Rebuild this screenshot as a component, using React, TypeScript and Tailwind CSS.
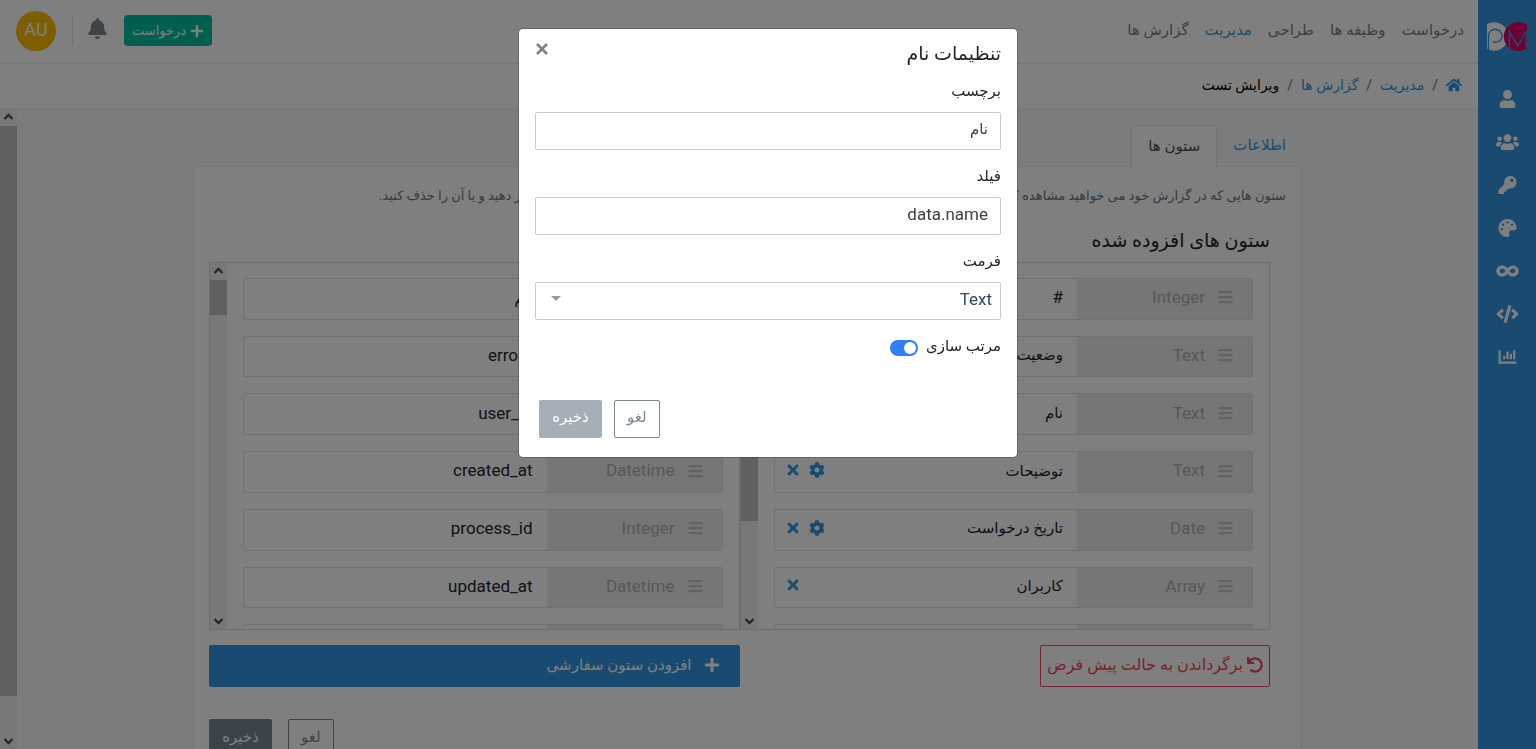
import type { ReactNode } from 'react'
import {
  FaBars,
  FaBell,
  FaChartBar,
  FaCode,
  FaCog,
  FaHome,
  FaInfinity,
  FaKey,
  FaPalette,
  FaPlus,
  FaTimes,
  FaUndo,
  FaUser,
  FaUsers,
} from 'react-icons/fa'

type Column = {
  label: string
  type: string
  config?: boolean
  remove?: boolean
}

const sideLinks = [
  { label: 'کاربران', icon: FaUser },
  { label: 'گروه ها', icon: FaUsers },
  { label: 'احراز هویت', icon: FaKey },
  { label: 'ظاهر', icon: FaPalette },
  { label: 'صف ها', icon: FaInfinity },
  { label: 'اسکریپت ها', icon: FaCode },
  { label: 'گزارش ها', icon: FaChartBar },
]

const navLinks = [
  { label: 'درخواست' },
  { label: 'وظیفه ها' },
  { label: 'طراحی' },
  { label: 'مدیریت', active: true },
  { label: 'گزارش ها' },
]

const addedColumns: Column[] = [
  { label: '#', type: 'Integer', config: true, remove: true },
  { label: 'وضعیت', type: 'Text', config: true, remove: true },
  { label: 'نام', type: 'Text', config: true, remove: true },
  { label: 'توضیحات', type: 'Text', config: true, remove: true },
  { label: 'تاریخ درخواست', type: 'Date', config: true, remove: true },
  { label: 'کاربران', type: 'Array', remove: true },
  { label: '', type: '' },
]

const availableColumns: Column[] = [
  { label: 'نام', type: 'Text' },
  { label: 'errors', type: 'Array' },
  { label: 'user_id', type: 'Integer' },
  { label: 'created_at', type: 'Datetime' },
  { label: 'process_id', type: 'Integer' },
  { label: 'updated_at', type: 'Datetime' },
  { label: '', type: '' },
]

// Roboto runs smaller than the Persian face, so Latin text is set larger
const isLatin = (text: string) => /^[#\w.]+$/.test(text)

function Logo() {
  return (
    <svg viewBox="0 0 40 29" className="w-10 overflow-hidden" fill="none" aria-hidden="true">
      <circle cx="7" cy="14.5" r="14.3" fill="#fff" />
      <path d="M1.5 29V14C1.5 5 15 5 15 14C15 19 10 21 6 20" stroke="#3397e1" strokeWidth="1.3" />
      <circle cx="31.3" cy="14.5" r="14.5" fill="#d60064" />
      <path d="M22.5 26V10L31 24L39 9V26" stroke="#3397e1" strokeWidth="1.5" />
    </svg>
  )
}

function Sidebar() {
  return (
    <aside className="flex w-[58px] shrink-0 flex-col items-center bg-[#3397e1] pt-[22px]">
      <a href="#" aria-label="ProcessMaker">
        <Logo />
      </a>
      <nav className="mt-[38px] flex flex-col items-center gap-[23px]">
        {sideLinks.map(({ label, icon: Icon }) => (
          <a key={label} href="#" aria-label={label} className="flex h-5 items-center text-white">
            <Icon className="h-[18px] w-[23px]" />
          </a>
        ))}
      </nav>
    </aside>
  )
}

function Topbar() {
  return (
    <header className="flex h-16 shrink-0 items-center justify-between border-b border-[#eceff1] bg-white pr-3.5 pb-0.5 pl-4">
      <nav className="flex gap-4">
        {navLinks.map((link) => (
          <a key={link.label} href="#" className={link.active ? 'text-[#3397e1]' : 'text-[#7f7f7f]'}>
            {link.label}
          </a>
        ))}
      </nav>
      <div className="flex items-center">
        <button className="flex h-[31px] items-center gap-1 rounded-sm bg-[#00bf9c] px-2 text-[13px] text-white">
          <FaPlus className="size-3.5" />
          درخواست
        </button>
        <button aria-label="اعلان ها" className="mr-4 pb-1 text-[#788793]">
          <FaBell className="size-[21px]" />
        </button>
        <div className="mr-3.5 ml-4 h-[30px] w-px bg-[#dee2e6]" />
        <button className="size-10 rounded-full bg-[#fdbf00] pb-0.5 text-lg text-white">AU</button>
      </div>
    </header>
  )
}

function Breadcrumb() {
  return (
    <nav className="flex h-[45px] shrink-0 items-center gap-2 border-b border-[#eceff1] bg-white px-4 pb-0.5 text-sm">
      <a href="#" aria-label="خانه" className="text-[#3397e1]">
        <FaHome className="size-4" />
      </a>
      <span className="text-[#6c757d]">/</span>
      <a href="#" className="text-[#3397e1]">مدیریت</a>
      <span className="text-[#6c757d]">/</span>
      <a href="#" className="text-[#3397e1]">گزارش ها</a>
      <span className="text-[#6c757d]">/</span>
      <span className="text-black">ویرایش تست</span>
    </nav>
  )
}

function Chevron({ down = false }: { down?: boolean }) {
  return (
    <svg viewBox="0 0 17 17" className={down ? 'size-[17px] shrink-0 rotate-180' : 'size-[17px] shrink-0'}>
      <path d="M4.5 10L8.5 6L12.5 10" fill="none" stroke="#505050" strokeWidth="2.4" />
    </svg>
  )
}

function Scrollbar({ children }: { children: ReactNode }) {
  return (
    <div className="flex w-[17px] shrink-0 flex-col bg-[#f1f1f1]">
      <Chevron />
      <div className="flex min-h-0 flex-1 flex-col">{children}</div>
      <Chevron down />
    </div>
  )
}

function ColumnRow({ label, type, config, remove }: Column) {
  return (
    <li className="flex min-h-0 flex-1 rounded-xs border border-[#e3e3e3] bg-white">
      <div className="flex w-[175px] items-center gap-3 bg-[#ececec] pr-[18px] pb-0.5 text-[17px] text-[#b0b0b0]">
        <FaBars className="size-[17px] pb-px text-[#c4c4c4]" />
        <span>{type}</span>
      </div>
      <div className="flex flex-1 items-center gap-2 pr-3.5 pb-0.5 pl-2.5 text-[#212529]">
        <span className={isLatin(label) ? 'flex-1 text-[17px]' : 'flex-1'}>{label}</span>
        {config && (
          <button aria-label="تنظیمات" className="pb-0.5 text-[#3397e1]">
            <FaCog className="size-4" />
          </button>
        )}
        {remove && (
          <button aria-label="حذف" className="pb-0.5 text-[#3397e1]">
            <FaTimes className="size-4" />
          </button>
        )}
      </div>
    </li>
  )
}

function ColumnList({ columns }: { columns: Column[] }) {
  return (
    <div className="h-[368px] flex-1 overflow-hidden border border-[#dadada]">
      <div className="flex h-full">
        <div className="min-w-0 flex-1 px-4 pt-[15px]">
          <ul className="flex h-[388px] flex-col gap-4">
            {columns.map((column, i) => (
              <ColumnRow key={i} {...column} />
            ))}
          </ul>
        </div>
        <Scrollbar>
          <div className={columns === addedColumns ? 'h-[241px] bg-[#c1c1c1]' : 'h-[35px] bg-[#c1c1c1]'} />
        </Scrollbar>
      </div>
    </div>
  )
}

function Columns() {
  return (
    <main className="mx-auto mt-4 w-full max-w-[1109px]">
      <div className="flex px-4">
        <button className="h-[41px] text-[#3397e1]">اطلاعات</button>
        <button className="mr-4 -mb-px ml-auto h-[42px] rounded-t-xs border border-b-0 border-[#e3e7ea] bg-white px-4 text-[#495057]">
          ستون ها
        </button>
      </div>
      <section className="border border-[#e9edf0] bg-white px-[15px] pt-[18px]">
        <p className="h-5 text-[13px] leading-[22px] whitespace-nowrap text-[#6c757d]">
          ستون هایی که در گزارش خود می خواهید مشاهده کنید را به ستون سمت راست بکشید. سپس می توانید ترتیب نمایش و تنظیمات هر ستون را تغییر دهید و یا آن را حذف کنید.
        </p>
        <div className="pr-4">
          <div className="mt-5 flex h-[37px] items-center pb-1 text-[19px] text-[#212529]">
            <h2 className="flex-1">ستون های افزوده شده</h2>
            <h2 className="flex-1">ستون های موجود</h2>
          </div>
          <div className="flex">
            <ColumnList columns={addedColumns} />
            <ColumnList columns={availableColumns} />
          </div>
          <div className="mt-[15px] flex">
            <div className="w-1/2">
              <button className="flex h-[42px] items-center gap-1 rounded-xs border border-[#ed4757] px-1.5 pb-0.5 text-base text-[#ed4757]">
                <FaUndo className="size-4" />
                برگرداندن به حالت پیش فرض
              </button>
            </div>
            <button className="flex h-[42px] w-1/2 items-center gap-3 rounded-xs bg-[#3397e1] px-5 pb-0.5 text-white">
              <FaPlus className="size-4" />
              افزودن ستون سفارشی
            </button>
          </div>
          <div className="mt-8 flex justify-end gap-4">
            <button className="h-[38px] rounded-xs border border-[#788793] px-3 pb-0.5 text-[#788793]">لغو</button>
            <button className="h-[38px] w-[63px] rounded-xs bg-[#788793] pb-0.5 text-white">ذخیره</button>
          </div>
        </div>
      </section>
    </main>
  )
}

function Field({ id, label, children }: { id: string; label: string; children: ReactNode }) {
  return (
    <div className="mb-4">
      <label htmlFor={id} className="block h-[31px] leading-[21px]">
        {label}
      </label>
      {children}
    </div>
  )
}

function SettingsModal() {
  return (
    <div className="fixed inset-0 bg-black/50 pt-7">
      <div
        role="dialog"
        aria-labelledby="modal-title"
        className="mx-auto max-w-[500px] rounded-[5px] border border-black/20 bg-white bg-clip-padding px-4 pb-[19px] text-[#212529]"
      >
        <div className="flex h-[52px] items-center justify-between pb-0.5">
          <h5 id="modal-title" className="text-[19px]">تنظیمات نام</h5>
          <button aria-label="بستن" className="mb-2.5 flex w-3.5 justify-center text-[#7f7f7f]">
            <svg viewBox="0 0 12 12" className="size-3">
              <path d="M1 1L11 11M11 1L1 11" stroke="currentColor" strokeWidth="2.6" />
            </svg>
          </button>
        </div>
        <Field id="label" label="برچسب">
          <input
            id="label"
            defaultValue="نام"
            className="h-[38px] w-full rounded-xs border border-[#c5cdd3] px-3 pb-1 text-[#3c4248]"
          />
        </Field>
        <Field id="field" label="فیلد">
          <input
            id="field"
            defaultValue="data.name"
            className="h-[38px] w-full rounded-xs border border-[#c5cdd3] px-3 pb-1 text-[17px] text-[#3c4248]"
          />
        </Field>
        <Field id="format" label="فرمت">
          <div className="relative">
            <select
              id="format"
              className="h-[38px] w-full appearance-none rounded-xs border border-[#c5cdd3] px-2 pb-0.5 text-[17px] text-[#35495e]"
            >
              <option>Text</option>
              <option>Integer</option>
              <option>Datetime</option>
            </select>
            <span className="pointer-events-none absolute top-3.5 left-4 border-x-[5px] border-t-[5px] border-x-transparent border-t-[#999]" />
          </div>
        </Field>
        <div className="flex h-6 items-center gap-2">
          <label htmlFor="sortable" className="pb-1">مرتب سازی</label>
          <input
            id="sortable"
            type="checkbox"
            defaultChecked
            className="flex h-4 w-7 appearance-none items-center justify-end rounded-full bg-[#adb5bd] px-0.5 before:size-3 before:rounded-full before:bg-white checked:justify-start checked:bg-[#2f80f8]"
          />
        </div>
        <div className="mt-10 flex justify-end gap-3 pl-1">
          <button className="h-[38px] rounded-xs border border-[#788793] px-3 pb-1 text-[#788793]">لغو</button>
          <button className="h-[38px] w-[63px] rounded-xs bg-[#a6afb8] pb-1 text-white">ذخیره</button>
        </div>
      </div>
    </div>
  )
}

export default function App() {
  return (
    <div
      dir="rtl"
      className="flex h-screen overflow-hidden bg-[#f7f9fb] font-['Roboto','DejaVu_Sans',sans-serif] text-[15px]"
    >
      <Sidebar />
      <div className="flex min-w-0 flex-1 flex-col">
        <Topbar />
        <Breadcrumb />
        <div className="flex min-h-0 flex-1">
          <div className="min-w-0 flex-1 overflow-hidden">
            <Columns />
          </div>
          <Scrollbar>
            <div className="h-[94%] bg-[#c1c1c1]" />
          </Scrollbar>
        </div>
      </div>
      <SettingsModal />
    </div>
  )
}
